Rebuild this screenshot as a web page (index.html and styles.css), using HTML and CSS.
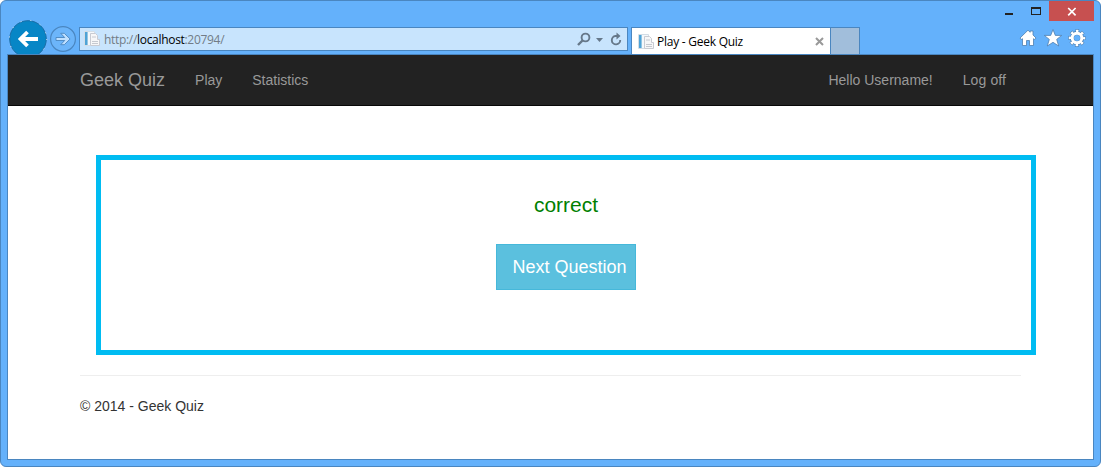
FILE: index.html
```
<!DOCTYPE html>
<html lang="en">
<head>
<meta charset="utf-8">
<title>Play - Geek Quiz</title>
<link rel="stylesheet" href="styles.css">
</head>
<body>
<div class="window">
  <div class="titlebar">
    <svg class="minbtn" width="8" height="20" viewBox="0 0 8 20"><path d="M0 12h8v2H0z" fill="#222"/></svg>
    <svg class="maxbtn" width="10" height="20" viewBox="0 0 10 20"><path d="M0 6h10v8H0zM1 8v5h8V8z" fill="#222" fill-rule="evenodd"/></svg>
    <div class="close"><svg width="45" height="20" viewBox="0 0 45 20"><path d="M19.200 7l7.400 7.400M26.600 7l-7.400 7.400" stroke="#fff" stroke-width="1.700"/></svg></div>
  </div>
  <div class="toolbar">
    <svg class="back" width="40" height="35" viewBox="0 0 40 35"><circle cx="20" cy="20" r="18.300" fill="#0786c6" stroke="#1b6da5"/><circle cx="20" cy="20" r="18.700" fill="none" stroke="#fff" stroke-width=".9" stroke-dasharray="1 9"/><path d="M30 20H12.500M19.500 13L12.500 20l7 7" fill="none" stroke="#fff" stroke-width="3.800"/></svg>
    <svg class="forward" width="28" height="28" viewBox="0 0 28 28"><circle cx="14" cy="14" r="12.400" fill="#6cb5fa" stroke="#4a86c0" stroke-width="1.200"/><path d="M7 12.500h8.700l-4-4.200h3.600l5.800 5.700-5.800 5.700h-3.600l4-4.200H7z" fill="#bfe0ff" stroke="#4a86c0" stroke-width=".9"/></svg>
    <div class="address">
      <svg class="page" width="16" height="16" viewBox="0 0 16 16"><path d="M.5.5h10v14H.5z" fill="#f5f8fb" stroke="#d3dde6"/><path d="M1 1h2.600v13H1z" fill="#4fa3d6"/><path d="M6.500 2.500h5l2 2v4h2v6h-9z" fill="#f7f7f8" stroke="#c9cbd2"/><path d="M8 6h4M8 10.500h6M8 12.500h6" stroke="#c6c9d0"/></svg>
      <span class="url">http://<b>localhost</b>:20794/</span>
      <svg width="48" height="22" viewBox="0 0 48 22"><g fill="none" stroke="#66788a"><circle cx="8.500" cy="9.500" r="3.900" stroke-width="1.900"/><path d="M5.500 12.500L1 17" stroke-width="2.400"/><path d="M40.500 8H38.500A4.200 4.200 0 1 0 43.200 12" stroke-width="1.900"/></g><path d="M19 10h7l-3.500 4zM39.500 4.500v7l4-3.500z" fill="#66788a"/></svg>
    </div>
    <div class="tab">
      <svg class="page" width="16" height="16" viewBox="0 0 16 16"><path d="M.5.5h10v14H.5z" fill="#f5f8fb" stroke="#d3dde6"/><path d="M1 1h2.600v13H1z" fill="#4fa3d6"/><path d="M6.500 2.500h5l2 2v4h2v6h-9z" fill="#f7f7f8" stroke="#c9cbd2"/><path d="M8 6h4M8 10.500h6M8 12.500h6" stroke="#c6c9d0"/></svg>
      <span class="tabname">Play - Geek Quiz</span>
      <svg width="9" height="9" viewBox="0 0 9 9"><path d="M1 1l7 7M8 1L1 8" stroke="#999" stroke-width="2"/></svg>
    </div>
    <div class="newtab"></div>
    <div class="tools">
      <svg width="18" height="18" viewBox="0 0 18 18"><path d="M1 9L9 1.200l2.200 2.100V2h2.800v4L17 9l-1.200 1.500-1.300-.8V16.500h-4v-5H7.500v5h-4V9.700l-1.300.8z" fill="#fff" stroke="#4f7fae" stroke-width=".8"/></svg>
      <svg width="18" height="18" viewBox="0 0 18 18"><path d="M9 .5l2.300 5.900h6.400l-5 4 2 6.600L9 13.300 3.300 17l2-6.600-5-4h6.400z" fill="#fff" stroke="#4f7fae" stroke-width=".8"/></svg>
      <svg width="18" height="18" viewBox="0 0 18 18"><circle cx="9" cy="9" r="6.700" fill="none" stroke="#4f7fae" stroke-width="4" stroke-dasharray="3.300 1.962" stroke-dashoffset="1.650"/><circle cx="9" cy="9" r="5" fill="none" stroke="#4f7fae" stroke-width="4"/><circle cx="9" cy="9" r="6.700" fill="none" stroke="#fff" stroke-width="3" stroke-dasharray="2.400 2.862" stroke-dashoffset="1.200"/><circle cx="9" cy="9" r="4.800" fill="none" stroke="#fff" stroke-width="3"/></svg>
    </div>
  </div>
  <div class="viewport">
    <nav class="navbar">
      <a class="brand">Geek Quiz</a><a class="link">Play</a><a class="link">Statistics</a>
      <a class="link user">Hello Username!</a><a class="link logoff">Log off</a>
    </nav>
    <main class="quiz">
      <p class="answer">correct</p>
      <button class="next">Next Question</button>
    </main>
    <footer class="footer">© 2014 - Geek Quiz</footer>
  </div>
</div>
</body>
</html>
```
FILE: styles.css
```
* { box-sizing: border-box; }
body { margin: 0; background: #fff; font: 14px/20px "Liberation Sans", Arial, sans-serif; color: #333; }
svg { display: block; flex: none; }
.window { width: 1101px; height: 467px; display: flex; flex-direction: column; background: #64b1fb; border: 1px solid #4a86c0; border-radius: 6px; padding: 0 6px 6px; overflow: hidden; }
.titlebar { height: 19px; flex: none; display: flex; justify-content: flex-end; }
.minbtn { margin-right: 18px; }
.maxbtn { margin-right: 8px; }
.close { width: 45px; height: 20px; background: #c75050; }
.toolbar { height: 34px; flex: none; display: flex; font: 12px/22px "Open Sans", "Noto Sans", sans-serif; }
.back { margin: -1px 0 0 1px; }
.forward { margin: 5px 0 0 1px; }
.address { width: 549px; height: 24px; margin: 7px 0 0 2px; padding: 0 2px 0 4px; display: flex; border: 1px solid #4a86c0; background: #c8e4fd; }
.page { margin-top: 3px; }
.url { flex: 1; margin-left: 4px; color: #727c86; letter-spacing: -.31px; line-height: 24px; white-space: nowrap; }
.url b { font-weight: 400; color: #000; }
.tab { width: 200px; height: 27px; margin: 7px 0 0 3px; padding: 0 6px; display: flex; align-items: center; border: 1px solid #4a86c0; border-bottom: 0; background: #fff; }
.tab .page { margin-top: 1px; }
.tabname { flex: 1; margin: 2px 0 0 3px; color: #000; letter-spacing: -.25px; white-space: nowrap; }
.newtab { width: 29px; height: 27px; margin-top: 7px; border: 1px solid #4a86c0; border-width: 1px 1px 0 0; background: #a1bedb; }
.tools { margin: 9px 8px 0 auto; display: flex; gap: 6.5px; }
.viewport { flex: 1; border: 1px solid #4a86c0; background: #fff; }
.navbar { height: 51px; padding: 0 72px; display: flex; align-items: center; background: #222; border-bottom: 1px solid #080808; color: #999; }
.brand { font-size: 18px; margin-right: 15px; }
.link { padding: 0 15px; }
.user { margin-left: auto; }
.logoff { letter-spacing: .1px; }
.quiz { width: 940px; height: 200px; margin: 49px 0 0 88px; padding-top: 34px; border: 5px solid #00bcf2; display: flex; flex-direction: column; align-items: center; }
.answer { margin: 0; color: green; font-size: 21px; line-height: 22px; }
.next { width: 140px; height: 46px; margin-top: 28px; padding: 0 0 0 7px; border: 1px solid #46b8da; background: #5bc0de; color: #fff; font: 18px "Liberation Sans", Arial, sans-serif; white-space: nowrap; }
.footer { width: 941px; margin: 20px 0 0 72px; padding-top: 20px; border-top: 1px solid #eee; }
```
